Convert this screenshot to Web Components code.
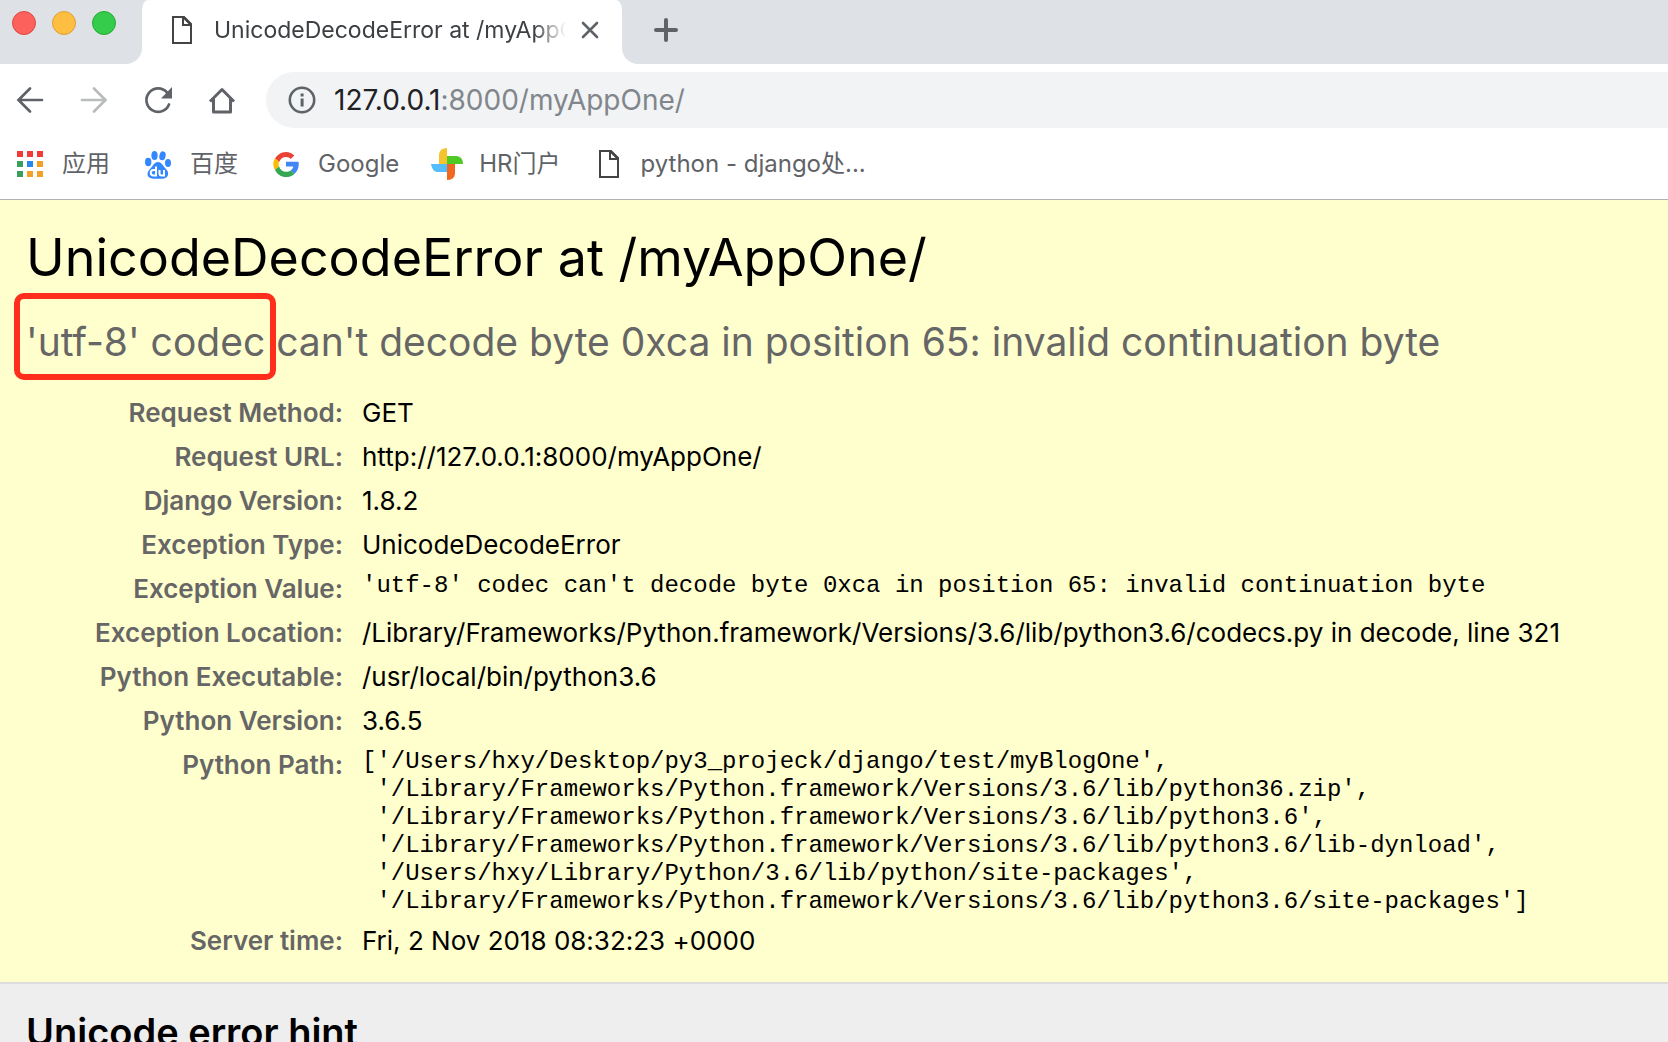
<!DOCTYPE html>
<html lang="zh-CN">
<head>
<meta charset="utf-8">
<title>UnicodeDecodeError at /myAppOne/</title>
<style>
html, body { margin: 0; height: 100%; }
body { overflow: hidden; font-family: Inter, "Noto Sans CJK SC", sans-serif; font-feature-settings: "calt" 0; background: #eee; color: #000; }
</style>
</head>
<body>
<browser-window>
  <tab-strip slot="tabs">UnicodeDecodeError at /myAppOne/</tab-strip>
  <nav-bar slot="nav" host="127.0.0.1" path=":8000/myAppOne/"></nav-bar>
  <bookmark-bar slot="bookmarks">
    <bookmark-link icon="apps">应用</bookmark-link>
    <bookmark-link icon="baidu">百度</bookmark-link>
    <bookmark-link icon="google">Google</bookmark-link>
    <bookmark-link icon="pinwheel">HR门户</bookmark-link>
    <bookmark-link icon="page">python - django处...</bookmark-link>
  </bookmark-bar>
  <error-summary></error-summary>
  <error-hint>Unicode error hint</error-hint>
</browser-window>
<script>
const ICONS = {
  page: '<svg width="32" height="32" viewBox="0 0 32 32" fill="none" stroke="#444" stroke-width="2"><path d="M7 3h11l7 7v19H7z"/><path d="M17 3v8h8M17.5 3.500l7 7"/></svg>',
  back: '<svg width="32" height="32" viewBox="0 0 32 32" fill="none" stroke="#5f6368" stroke-width="2.700" stroke-linecap="round"><path d="M28 16H5M16 4.500L4.500 16L16 27.500"/></svg>',
  forward: '<svg width="32" height="32" viewBox="0 0 32 32" fill="none" stroke="#b9bbbd" stroke-width="2.700" stroke-linecap="round"><path d="M4 16h23M16 4.500L27.500 16L16 27.500"/></svg>',
  reload: '<svg width="32" height="32" viewBox="0 0 32 32"><path d="M27 20.500A11.700 11.700 0 1 1 25 8.500" fill="none" stroke="#5f6368" stroke-width="2.700" stroke-linecap="round"/><path d="M30 3v11.500H19z" fill="#5f6368"/></svg>',
  home: '<svg width="32" height="32" viewBox="0 0 32 32" fill="none" stroke="#5f6368" stroke-width="3" stroke-linejoin="round"><path d="M4 17.500L16 5.500L28 17.500M7.500 15v13h17V15"/></svg>',
  info: '<svg width="32" height="32" viewBox="0 0 32 32"><circle cx="16" cy="16" r="12.200" fill="none" stroke="#5f6368" stroke-width="2.600"/><path d="M14.600 9.500h3v3h-3zM14.600 14.500h3v8h-3z" fill="#5f6368"/></svg>',
  apps: '<svg width="32" height="32" viewBox="0 0 32 32"><path d="M3 3h6v6H3zM13 3h6v6h-6zM23 3h6v6h-6z" fill="#f23a36"/><path d="M3 13h6v6H3zM3 23h6v6H3z" fill="#3a9f5c"/><path d="M13 13h6v6h-6z" fill="#2389f1"/><path d="M23 13h6v6h-6zM13 23h6v6h-6zM23 23h6v6h-6z" fill="#f2a026"/></svg>',
  baidu: '<svg width="32" height="32" viewBox="0 0 32 32" fill="#3388ff"><ellipse cx="6.200" cy="14" rx="3.200" ry="4.200"/><ellipse cx="12.500" cy="7.500" rx="3.100" ry="4.500"/><ellipse cx="20.500" cy="7.800" rx="3.100" ry="4.500" transform="rotate(12 20.500 7.800)"/><ellipse cx="26" cy="15" rx="3" ry="4"/><path d="M16 14c4 0 5 4 8 7c4 4 2 9-2 9.500c-3 .4-9 .4-12 0c-5-.5-6-6-2-9.500c3-3 4-7 8-7z"/><path d="M14 18.500v9h-2.500a2.500 2.500 0 0 1 0-5.500H14M17.500 22v3.500q0 2 2 2h2.500V22" fill="none" stroke="#fff" stroke-width="2"/></svg>',
  google: '<svg width="32" height="32" viewBox="2 2 44 44"><path fill="#EA4335" d="M24 14.500c3.100 0 5.200 1.300 6.500 2.500l4.900-4.800C32.400 9.400 28.600 7.500 24 7.500c-6.700 0-12.300 3.800-15 9.400l5.600 4.400c1.400-4.200 5.300-6.800 9.400-6.800z"/><path fill="#4285F4" d="M41.500 24.400c0-1.400-.1-2.400-.4-3.500H24v6.500h10c-.2 1.600-1.300 4-3.700 5.600l5.500 4.300c3.600-3.200 5.700-7.700 5.700-12.900z"/><path fill="#FBBC05" d="M14.500 27.500c-.4-1.100-.6-2.300-.6-3.500s.2-2.400.6-3.500L8.800 16C7.600 18.400 6.500 21.200 6.500 24s1 5.500 2.200 7.900z"/><path fill="#34A853" d="M24 42c4.700 0 8.700-1.600 11.800-4.700L30.300 33c-1.500 1-3.500 1.800-6.300 1.800-4.600 0-8.100-2.900-9.500-7.300l-5.800 4.400C11.500 37.800 17.200 42 24 42z"/></svg>',
  pinwheel: '<svg width="32" height="32" viewBox="0 0 32 32"><path d="M16 0v16H8V6q1-6 8-6z" fill="#f4c42f"/><path d="M16 8h10q6 1 6 8H16z" fill="#4fc926"/><path d="M0 16h16v8H6q-5-1-6-8z" fill="#56bdfb"/><path d="M16 16h8v10q-1 6-8 6z" fill="#f0681f"/></svg>',
  close: '<svg width="32" height="32" viewBox="0 0 32 32" stroke="#5f6368" stroke-width="2.600" stroke-linecap="round"><path d="M9 9l14 14M23 9L9 23"/></svg>',
  plus: '<svg width="32" height="32" viewBox="0 0 32 32" stroke="#5f6368" stroke-width="4" stroke-linecap="round"><path d="M16 6v20M6 16h20"/></svg>'
};
const RESET = `
  *{box-sizing:border-box}
  svg{display:block;flex:none}
  button{display:block;flex:none;margin:0;padding:0;border:0;background:none;font:inherit;color:inherit}
`;
function define(name, render) {
  customElements.define(name, class extends HTMLElement {
    connectedCallback() {
      if (!this.shadowRoot) this.attachShadow({ mode: 'open' }).innerHTML = render(this);
    }
  });
}

define('browser-window', () => `<style>${RESET}
  :host{display:block}
  header{background:#fff;border-bottom:1px solid #b3b3b3}
</style>
<header><slot name="tabs"></slot><slot name="nav"></slot><slot name="bookmarks"></slot></header>
<main><slot></slot></main>`);

define('tab-strip', () => `<style>${RESET}
  :host{display:flex;height:64px;background:#fff}
  .lights{display:flex;gap:16px;width:142px;padding:11px 0 0 12px;background:#dee1e6;border-bottom-right-radius:16px}
  .lights button{width:24px;height:24px;border-radius:50%;border:1px solid}
  .lights button:nth-child(1){background:#fc615c;border-color:#e2463f}
  .lights button:nth-child(2){background:#fdbe41;border-color:#dfa032}
  .lights button:nth-child(3){background:#35cb4b;border-color:#27ab35}
  .back{background:#dee1e6}
  .tab{display:flex;align-items:center;width:480px;height:64px;padding:0 16px 4px 24px;background:#fff;border-radius:6px 6px 0 0/10px 10px 0 0}
  .title{flex:1;margin-left:16px;overflow:hidden;white-space:nowrap;font-size:23px;line-height:32px;color:#3c4043;
    -webkit-mask-image:linear-gradient(to right,#000 calc(100% - 32px),transparent);mask-image:linear-gradient(to right,#000 calc(100% - 32px),transparent)}
  .close{margin-left:8px}
  .rest{flex:1;padding:14px 0 0 28px;background:#dee1e6;border-bottom-left-radius:16px}
</style>
<div class="lights"><button aria-label="Close window"></button><button aria-label="Minimize"></button><button aria-label="Zoom"></button></div>
<div class="back"><div class="tab">${ICONS.page}<span class="title"><slot></slot></span><button class="close" aria-label="Close tab">${ICONS.close}</button></div></div>
<div class="rest"><button aria-label="New tab">${ICONS.plus}</button></div>`);

define('nav-bar', el => `<style>${RESET}
  :host{display:flex;align-items:center;gap:28px;padding:8px 0 0 14px}
  nav{display:flex;gap:32px}
  .box{display:flex;align-items:center;flex:1;gap:16px;height:56px;padding-left:20px;background:#f1f3f4;border-radius:28px 0 0 28px;font-size:28px;line-height:36px;color:#80868b}
  b{font-weight:400;color:#202124}
</style>
<nav><button aria-label="Back">${ICONS.back}</button><button aria-label="Forward">${ICONS.forward}</button><button aria-label="Reload">${ICONS.reload}</button><button aria-label="Home">${ICONS.home}</button></nav>
<div class="box">${ICONS.info}<span><b>${el.getAttribute('host')}</b>${el.getAttribute('path')}</span></div>`);

define('bookmark-bar', () => `<style>
  :host{display:flex;align-items:center;gap:32px;height:71px;padding-left:14px}
</style><slot></slot>`);

define('bookmark-link', el => `<style>${RESET}
  :host{display:block;white-space:nowrap}
  a{display:flex;align-items:center;gap:16px;font-size:24px;line-height:32px;color:#5f6368;text-decoration:none}
</style><a href="#">${ICONS[el.getAttribute('icon')]}<span><slot></slot></span></a>`);

const ROWS = [
  ['Request Method:', 'GET'],
  ['Request URL:', 'http://127.0.0.1:8000/myAppOne/'],
  ['Django Version:', '1.8.2'],
  ['Exception Type:', 'UnicodeDecodeError'],
  ['Exception Value:', `<pre>'utf-8' codec can't decode byte 0xca in position 65: invalid continuation byte</pre>`],
  ['Exception Location:', '/Library/Frameworks/Python.framework/Versions/3.6/lib/python3.6/codecs.py in decode, line 321'],
  ['Python Executable:', '/usr/local/bin/python3.6'],
  ['Python Version:', '3.6.5'],
  ['Python Path:', `<pre>['/Users/hxy/Desktop/py3_projeck/django/test/myBlogOne',
 '/Library/Frameworks/Python.framework/Versions/3.6/lib/python36.zip',
 '/Library/Frameworks/Python.framework/Versions/3.6/lib/python3.6',
 '/Library/Frameworks/Python.framework/Versions/3.6/lib/python3.6/lib-dynload',
 '/Users/hxy/Library/Python/3.6/lib/python/site-packages',
 '/Library/Frameworks/Python.framework/Versions/3.6/lib/python3.6/site-packages']</pre>`],
  ['Server time:', 'Fri, 2 Nov 2018 08:32:23 +0000']
];
define('error-summary', () => `<style>${RESET}
  :host{display:block;padding:26px 26px 19px;background:#fffecd;border-bottom:2px solid #ddd}
  h1{margin:0;font-size:52px;line-height:64px;font-weight:400}
  h2{margin:28px 0 25px;font-size:39px;line-height:48px;font-weight:400;color:#666}
  .mark{position:relative}
  .mark::after{content:"";position:absolute;inset:-25px -11px -15px -12px;border:6px solid #ff2d1c;border-radius:10px}
  table{border-collapse:collapse;font-size:26px;line-height:36px}
  th,td{padding:4px 0;vertical-align:top;height:44px}
  th{width:317px;text-align:right;font-weight:600;color:#666}
  td{padding-left:19px}
  pre{margin:0;padding-top:1px;font-family:"Liberation Mono",monospace;font-size:24px;line-height:28px}
  tr:nth-child(9) td{padding-bottom:3px}
</style>
<h1>UnicodeDecodeError at /myAppOne/</h1>
<h2><span class="mark">'utf-8' codec</span> can't decode byte 0xca in position 65: invalid continuation byte</h2>
<table>${ROWS.map(([k, v]) => `<tr><th scope="row">${k}</th><td>${v}</td></tr>`).join('')}</table>`);

define('error-hint', () => `<style>
  :host{display:block;padding:24px 26px}
  h2{margin:0;font-size:38px;line-height:48px;font-weight:600}
</style><h2><slot></slot></h2>`);
</script>
</body>
</html>
